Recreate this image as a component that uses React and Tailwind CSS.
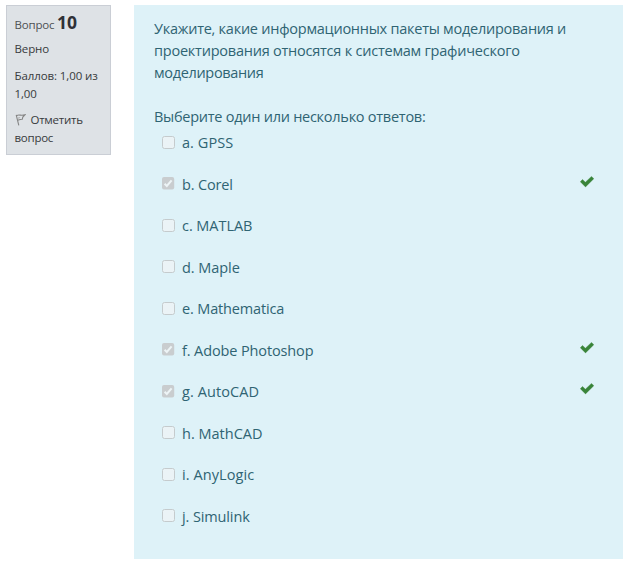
import React from "react";

const answers = [
  { text: "a. GPSS", track: "tracking-[0.05px]" },
  { text: "b. Corel", checked: true, track: "tracking-[-0.15px]" },
  { text: "c. MATLAB", track: "tracking-[-0.05px]" },
  { text: "d. Maple", track: "tracking-[-0.05px]" },
  { text: "e. Mathematica", track: "tracking-[-0.15px]" },
  { text: "f. Adobe Photoshop", checked: true, track: "tracking-[-0.12px]" },
  { text: "g. AutoCAD", checked: true, track: "tracking-[0.1px]" },
  { text: "h. MathCAD", track: "tracking-[0px]" },
  { text: "i. AnyLogic", track: "tracking-[0.08px]" },
  { text: "j. Simulink", track: "tracking-[-0.12px]" },
];

function Checkbox({ checked }) {
  return (
    <svg className="mt-[3.5px] h-[13px] w-[13px] shrink-0" viewBox="0 0 13 13">
      {checked ? (
        <>
          <rect x="0" y="0" width="12.2" height="12.5" rx="2" fill="#c9cdcf" />
          <path d="M2.6 6.8 L4.8 9 L9.6 3.4" fill="none" stroke="#edf4f6" strokeWidth="2" />
        </>
      ) : (
        <rect x="0.5" y="0.5" width="12" height="12" rx="2" fill="#ebf3f6" stroke="#c5cbcd" />
      )}
    </svg>
  );
}

function Tick() {
  return (
    <svg className="mt-[2px] h-[12px] w-[14px]" viewBox="0 0 14 12">
      <path d="M0.3 5.7 L2.5 3.5 L5.4 6.2 L11.5 0.4 L13.8 2.7 L5.5 10.9 Z" fill="#398439" stroke="#398439" strokeWidth="0.4" strokeLinejoin="round" />
    </svg>
  );
}

function Flag() {
  return (
    <svg className="mr-[5px] inline-block h-[12px] w-[11px] align-[-2px]" viewBox="0 0 11 12">
      <path d="M1.2 0.8 L3.8 11.3 M1.8 1.4 C4 0.4 6 1.9 9.8 0.9 L7.8 3.1 L7.3 5.2 C5.5 5 4.4 5.8 3 6.2" fill="none" stroke="#858585" strokeWidth="1.1" />
      <path d="M3.1 3.2 L5.5 3 L3.5 5.2 Z" fill="#b3b3b3" />
    </svg>
  );
}

export default function App() {
  return (
    <div className="flex h-[567px] w-[632px] items-start bg-white pl-[6px] pt-[5px] font-['Open_Sans','Noto_Sans',sans-serif]">
      <aside className="h-[150px] w-[105px] shrink-0 border border-[#caced5] bg-[#dee2e6] pl-[7.5px] text-[11.5px] leading-[18px] text-[#373a3c]">
        <h3 className="mt-[5px] flex h-[22px] items-baseline whitespace-pre leading-[22px]">
          <span className="text-[11.5px] tracking-[-0.2px] text-[#4d5053]">Вопрос </span>
          <span className="text-[17.5px] font-bold text-[#2f3136]">10</span>
        </h3>
        <div className="mt-[7px] whitespace-nowrap tracking-[-0.1px]">Верно</div>
        <div className="mt-[9px] whitespace-nowrap tracking-[-0.1px]">Баллов: 1,00 из<br />1,00</div>
        <div className="mt-[8px] whitespace-nowrap tracking-[-0.25px]"><Flag />Отметить<br />вопрос</div>
      </aside>
      <main className="ml-[23px] h-[554px] w-[489px] shrink-0 bg-[#def2f8] pl-[20px] pt-[13px] text-[14.5px] text-[#2f6473]">
        <div className="whitespace-nowrap leading-[22px]">
          <div className="tracking-[-0.25px]">Укажите, какие информационных пакеты моделирования и</div>
          <div className="tracking-[-0.23px]">проектирования относятся к системам графического</div>
          <div className="tracking-[-0.33px]">моделирования</div>
        </div>
        <div className="mt-[22px] whitespace-nowrap leading-[22px] tracking-[-0.26px]">
          Выберите один или несколько ответов:
        </div>
        <div className="mt-[4px] pl-[8px] pr-[29px]">
          {answers.map((a) => (
            <div key={a.text} className="flex h-[41.5px] items-start justify-between">
              <label className="flex items-start gap-[7px] whitespace-nowrap leading-[22px]">
                <Checkbox checked={a.checked} />
                <span className={a.track}>{a.text}</span>
              </label>
              {a.checked && <Tick />}
            </div>
          ))}
        </div>
      </main>
    </div>
  );
}
